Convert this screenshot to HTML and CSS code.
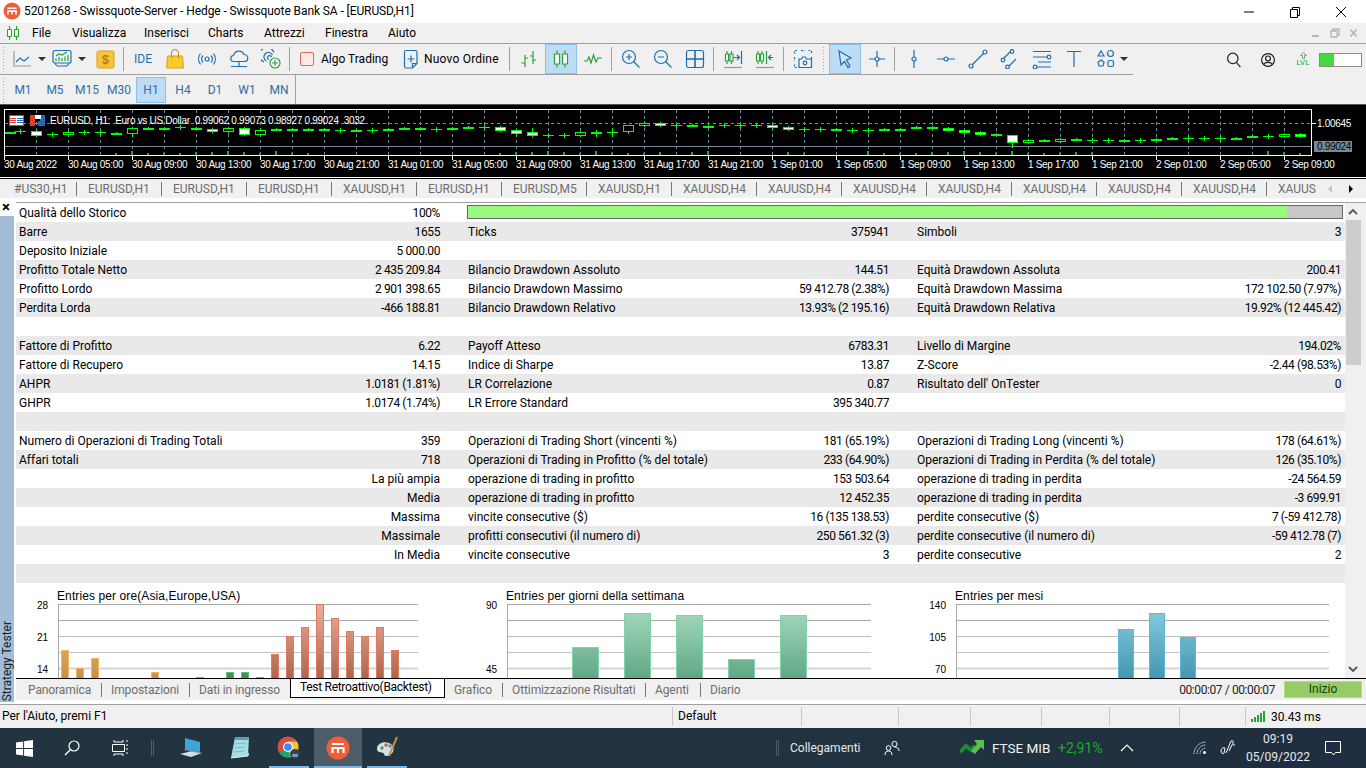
FILE: index.html
```html
<!DOCTYPE html>
<html lang="it">
<head>
  <meta charset="UTF-8" />
  <title>5201268 - Swissquote-Server - Hedge - Swissquote Bank SA - [EURUSD,H1]</title>
  <link rel="stylesheet" href="styles.css">
</head>
<body>
  <div class="titlebar">
    <svg class="logo" viewBox="0 0 20 20" width="18" height="18"><circle cx="10" cy="10" r="9.500" fill="#f25c37"/><path d="M5 7h10M5.500 14v-4h9v4M10 10v4" fill="none" stroke="#fff" stroke-width="1.800"/></svg>
    <span class="title">5201268 - Swissquote-Server - Hedge - Swissquote Bank SA - [EURUSD,H1]</span>
    <div class="winctl">
      <svg viewBox="0 0 12 12" width="12" height="12"><path d="M1 6h10" stroke="#000" fill="none"/></svg>
      <svg viewBox="0 0 12 12" width="12" height="12"><path d="M1.500 3.500h7v8h-7zM3.500 3.500v-2h7v8h-2" stroke="#000" fill="none"/></svg>
      <svg viewBox="0 0 12 12" width="12" height="12"><path d="M1 1l10 10M11 1L1 11" stroke="#000" fill="none"/></svg>
    </div>
  </div>

  <div class="menubar">
    <svg class="menuicon" viewBox="0 0 14 14" width="14" height="14"><path d="M3.500 0v14M10.500 0v14" stroke="#1aa81a" fill="none"/><path d="M1.500 3.500h4v7h-4zM8.500 3.500h4v7h-4z" fill="#fff" stroke="#1aa81a"/></svg>
    <span class="m1">File</span><span class="m2">Visualizza</span><span class="m3">Inserisci</span><span class="m4">Charts</span><span class="m5">Attrezzi</span><span class="m6">Finestra</span><span class="m7">Aiuto</span>
    <div class="mdi">
      <svg viewBox="0 0 10 10" width="10" height="10"><path d="M1 8h7" stroke="#b5b5b5" stroke-width="2" fill="none"/></svg>
      <svg viewBox="0 0 10 10" width="10" height="10"><path d="M1 3h6v6H1zM3 3V1h6v6H7" stroke="#b5b5b5" stroke-width="1.300" fill="none"/></svg>
      <svg viewBox="0 0 10 10" width="10" height="10"><path d="M1.500 1.500l6 7M7.500 1.500l-6 7" stroke="#b5b5b5" stroke-width="1.600" fill="none"/></svg>
    </div>
  </div>

  <div class="toolrow">
    <div class="toolbar">
      <div class="handle"></div>
      <div class="tb w30"><svg class="ic" viewBox="0 0 20 20"><path d="M2 2v15h17" stroke="#999"/><path d="M4 13l4-4 4 3 5-4"/></svg></div>
      <div class="dd"></div>
      <div class="tb w30"><svg class="ic" viewBox="0 0 20 20"><path d="M3 1.500h14a2 2 0 0 1 2 2V12a2 2 0 0 1-2 2H3a2 2 0 0 1-2-2V3.500a2 2 0 0 1 2-2zM5 17h10M3 14.500l2 2.500M17 14.500L15 17"/><path d="M4 12V9.500M7 12V8M10 12V9M13 12V7.500M16 12V6M4 7l3-2 3 1 5-3" stroke="#27a33a"/></svg></div>
      <div class="dd"></div>
      <div class="tb gap2"><svg viewBox="0 0 20 20" width="19" height="19"><rect x="1" y="1" width="18" height="18" rx="2" fill="#f7c437" stroke="#d9a021"/><text x="10" y="15" class="dollar">$</text></svg></div>
      <div class="sep"></div>
      <div class="tb blue">IDE</div>
      <div class="tb"><svg viewBox="0 0 20 20" width="20" height="20"><path d="M2.500 7h15l1 12h-17z" fill="#f9c92d" stroke="#d9a021"/><path d="M6.500 9V4a3.500 3.500 0 0 1 7 0v5" fill="none" stroke="#b98c1c"/></svg></div>
      <div class="tb"><svg class="ic" viewBox="0 0 20 20"><circle cx="10" cy="10" r="2"/><path d="M6 6.500a5 5 0 0 0 0 7M14 6.500a5 5 0 0 1 0 7M3.500 4.500a9 9 0 0 0 0 11M16.500 4.500a9 9 0 0 1 0 11"/></svg></div>
      <div class="tb"><svg class="ic" viewBox="0 0 20 20"><path d="M5 12.500a3 3 0 0 1-.5-6 5.500 5.500 0 0 1 10.500-1 3.500 3.500 0 0 1 .5 7zM10 12.500V16M2 17.500h16M10 16v1.500"/></svg></div>
      <div class="tb"><svg class="ic" viewBox="0 0 20 20"><path d="M3 13a7.500 7.500 0 1 1 10-9.500M5.500 12a4.500 4.500 0 1 1 6-6M8 10.500a2 2 0 1 1 2.500-2.500"/><circle cx="14" cy="14" r="5" fill="#fff" stroke="#27a33a"/><path d="M14 11v6M11 14h6" stroke="#27a33a"/></svg></div>
      <div class="sep"></div>
      <div class="algo"><span class="check"></span>Algo Trading</div>
      <div class="order"><svg class="ic" viewBox="0 0 20 20"><path d="M5 1.500h9.500a1.500 1.500 0 0 1 1.500 1.500v11.500L11.500 19H5a1.500 1.500 0 0 1-1.500-1.500V3A1.500 1.500 0 0 1 5 1.500zM10 6.500v7M6.500 10h7M16 14.500h-4.500V19"/></svg>Nuovo Ordine</div>
      <div class="sep"></div>
      <div class="tb"><svg class="ic gr" viewBox="0 0 20 20"><path d="M6 6v12M2.500 14H6M6 9h3M14 2v13M11 7h3M14 11h3"/></svg></div>
      <div class="tb on"><svg class="ic gr" viewBox="0 0 20 20"><path d="M6 1.500v17M14 1.500v17"/><path d="M3.500 5h5v10h-5zM11.500 5h5v10h-5z" fill="#fff"/></svg></div>
      <div class="tb"><svg class="ic gr" viewBox="0 0 20 20"><path d="M1 12h3l2-4 2 6 2.500-8 2.500 7 2-4h4"/></svg></div>
      <div class="sep"></div>
      <div class="tb"><svg class="ic" viewBox="0 0 20 20"><circle cx="8" cy="8" r="6.500"/><path d="M12.500 12.500l6 6M8 5v6M5 8h6"/></svg></div>
      <div class="tb"><svg class="ic" viewBox="0 0 20 20"><circle cx="8" cy="8" r="6.500"/><path d="M12.500 12.500l6 6M5 8h6"/></svg></div>
      <div class="tb"><svg class="ic" viewBox="0 0 20 20"><rect x="1.500" y="1.500" width="17" height="17" rx="2"/><path d="M10 1.500v17M1.500 10h17" stroke-width="1.600"/></svg></div>
      <div class="sep"></div>
      <div class="tb"><svg class="ic gr" viewBox="0 0 20 20"><path d="M4 2v13M8.500 2v13"/><path d="M2.500 5h3v7h-3zM7 5h3v7H7z" fill="#fff"/><path d="M11 8.500h5M14 6l2.500 2.500L14 11" stroke="#1b6fb5"/><path d="M18.500 2v13" stroke="#1b6fb5"/><path d="M1 18.500h18" stroke="#999"/></svg></div>
      <div class="tb"><svg class="ic gr" viewBox="0 0 20 20"><path d="M3 2v13M7 2v13"/><path d="M1.500 5h3v7h-3zM5.500 5h3v7h-3z" fill="#fff"/><path d="M11.500 2v13" stroke="#27a33a"/><path d="M18 8.500h-4.500M16 6l-2.500 2.500L16 11" stroke="#1b6fb5"/><path d="M1 18.500h18" stroke="#999"/></svg></div>
      <div class="sep"></div>
      <div class="tb"><svg class="ic" viewBox="0 0 20 20"><path d="M1.500 4.500v-3h3M8 1.500h4M15.500 1.500h3v3M18.500 8v2M1.500 8v4M1.500 15.500v3h3M8 18.500h2" stroke-dasharray="2 1.500"/><path d="M6 18.500V10h2.500l1-2h3l1 2H18.500v8.500z"/><circle cx="12" cy="14" r="1.800"/></svg></div>
      <div class="handle narrow"></div>
      <div class="tb on"><svg class="ic" viewBox="0 0 20 20"><path d="M4 2l12 7-4.500 2 3.500 6-2 1.500-3.500-6L6 16z" fill="#cfe4f7"/></svg></div>
      <div class="tb"><svg class="ic" viewBox="0 0 20 20"><path d="M10 2v6M10 12v6M2 10h6M12 10h6"/><circle cx="10" cy="10" r="2"/></svg></div>
      <div class="sep tight"></div>
      <div class="tb"><svg class="ic" viewBox="0 0 20 20"><path d="M10 1v7M10 12v7"/><circle cx="10" cy="10" r="2"/></svg></div>
      <div class="tb"><svg class="ic" viewBox="0 0 20 20"><path d="M1 10h7M12 10h7"/><circle cx="10" cy="10" r="2"/></svg></div>
      <div class="tb"><svg class="ic" viewBox="0 0 20 20"><path d="M4.500 15.500L15.500 4.500"/><circle cx="3" cy="17" r="2"/><circle cx="17" cy="3" r="2"/></svg></div>
      <div class="tb"><svg class="ic" viewBox="0 0 20 20"><path d="M4 9l6-6M9 17l7-7"/><circle cx="3" cy="11" r="1.800"/><circle cx="12" cy="2.500" r="1.800"/><circle cx="7.500" cy="18" r="1.800"/></svg></div>
      <div class="tb"><svg class="ic" viewBox="0 0 20 20"><path d="M1 2.500h18M1 8h14M6 13h13M5 18h14"/><circle cx="17" cy="8" r="1.800"/><circle cx="3" cy="18" r="1.800"/></svg></div>
      <div class="tb"><svg class="ic" viewBox="0 0 20 20"><path d="M3 2.500h14M10 2.500V18"/></svg></div>
      <div class="tb"><svg class="ic" viewBox="0 0 20 20"><path d="M5 2l3 5H2z"/><circle cx="14.500" cy="4.500" r="3"/><path d="M5 11l3 2.200-1 3.800H3l-1-3.800z"/><rect x="12" y="11.500" width="5.500" height="6" rx="1.500"/></svg></div>
      <div class="dd small"></div>
    </div>
    <div class="account">
      <svg class="dark" viewBox="0 0 20 20" width="16" height="16"><circle cx="8.500" cy="8" r="6.500"/><path d="M13 13l5 6"/></svg>
      <svg class="dark" viewBox="0 0 20 20" width="16" height="16"><circle cx="10" cy="10" r="8"/><circle cx="10" cy="8" r="3"/><path d="M4.500 16c1-4 10-4 11 0"/></svg>
      <div class="lvl"><svg viewBox="0 0 12 8" width="9" height="7"><path d="M6 0l4 4H7.500v4h-3V4H2z" fill="none" stroke="#27a33a"/></svg><span>LVL</span></div>
      <div class="lvlbar"><div class="lvlfill"></div></div>
    </div>
  </div>

  <div class="timerow">
    <div class="handle"></div>
    <div class="tf">M1</div><div class="tf">M5</div><div class="tf">M15</div><div class="tf">M30</div><div class="tf on">H1</div><div class="tf">H4</div><div class="tf">D1</div><div class="tf">W1</div><div class="tf">MN</div>
  </div>

  <div class="chart">
    <svg id="candles" viewBox="0 105 1366 72" width="1366" height="72">
      <rect x="9.500" y="115.500" width="14" height="10" fill="#fff" stroke="#d8402c"/>
      <path d="M10 118.500h6M10 120.500h6M10 122.500h6" stroke="#d8402c"/>
      <path d="M17 118.500h6M17 120.500h6M17 122.500h6" stroke="#1b6fb5"/>
      <path d="M30 115h8v3h-3v8h-5z" fill="#d8402c"/>
      <path d="M38 115h7v11h-7v-5h2v-3h-2z" fill="#1b6fb5"/>
      <path d="M35 115h6v4h-6z" fill="#fff"/>
      <text x="50" y="124" class="clabel legend" textLength="315" lengthAdjust="spacing">EURUSD, H1:  Euro vs US Dollar  0.99062 0.99073 0.98927 0.99024  3032</text>
      <text x="1317" y="127" class="clabel">1.00645</text>
      <rect x="1314" y="141" width="38" height="11" fill="#778899"/>
      <text x="1317" y="150" class="clabel price">0.99024</text>
    </svg>
  </div>
  <div class="chartedge"></div>

  <div class="tabs">
    <div class="tablist">
      <div class="tab first">#US30,H1</div><div class="tab">EURUSD,H1</div><div class="tab">EURUSD,H1</div><div class="tab">EURUSD,H1</div><div class="tab">XAUUSD,H1</div><div class="tab">EURUSD,H1</div><div class="tab">EURUSD,M5</div><div class="tab">XAUUSD,H1</div><div class="tab">XAUUSD,H4</div><div class="tab">XAUUSD,H4</div><div class="tab">XAUUSD,H4</div><div class="tab">XAUUSD,H4</div><div class="tab">XAUUSD,H4</div><div class="tab">XAUUSD,H4</div><div class="tab">XAUUSD,H4</div><div class="tab last">XAUUSD,H4</div>
    </div>
    <div class="arrow prev"></div>
    <div class="arrow next"></div>
  </div>

  <div class="tester">
    <div class="side">
      <div class="closex">×</div>
      <div class="strip"><span>Strategy Tester</span></div>
    </div>
    <div class="panel">
      <div class="report">
        <div class="sheet">
          <div class="row">
            <div class="cell"><span>Qualità dello Storico</span><span>100%</span></div>
            <div class="quality"><div class="qfill"></div></div>
          </div>
          <div class="row">
            <div class="cell"><span>Barre</span><span>1655</span></div>
            <div class="cell"><span>Ticks</span><span>375941</span></div>
            <div class="cell"><span>Simboli</span><span>3</span></div>
          </div>
          <div class="row">
            <div class="cell"><span>Deposito Iniziale</span><span>5 000.00</span></div>
            <div class="cell"></div><div class="cell"></div>
          </div>
          <div class="row">
            <div class="cell"><span>Profitto Totale Netto</span><span>2 435 209.84</span></div>
            <div class="cell"><span>Bilancio Drawdown Assoluto</span><span>144.51</span></div>
            <div class="cell"><span>Equità Drawdown Assoluta</span><span>200.41</span></div>
          </div>
          <div class="row">
            <div class="cell"><span>Profitto Lordo</span><span>2 901 398.65</span></div>
            <div class="cell"><span>Bilancio Drawdown Massimo</span><span>59 412.78 (2.38%)</span></div>
            <div class="cell"><span>Equità Drawdown Massima</span><span>172 102.50 (7.97%)</span></div>
          </div>
          <div class="row">
            <div class="cell"><span>Perdita Lorda</span><span>-466 188.81</span></div>
            <div class="cell"><span>Bilancio Drawdown Relativo</span><span>13.93% (2 195.16)</span></div>
            <div class="cell"><span>Equità Drawdown Relativa</span><span>19.92% (12 445.42)</span></div>
          </div>
          <div class="row"></div>
          <div class="row">
            <div class="cell"><span>Fattore di Profitto</span><span>6.22</span></div>
            <div class="cell"><span>Payoff Atteso</span><span>6783.31</span></div>
            <div class="cell"><span>Livello di Margine</span><span>194.02%</span></div>
          </div>
          <div class="row">
            <div class="cell"><span>Fattore di Recupero</span><span>14.15</span></div>
            <div class="cell"><span>Indice di Sharpe</span><span>13.87</span></div>
            <div class="cell"><span>Z-Score</span><span>-2.44 (98.53%)</span></div>
          </div>
          <div class="row">
            <div class="cell"><span>AHPR</span><span>1.0181 (1.81%)</span></div>
            <div class="cell"><span>LR Correlazione</span><span>0.87</span></div>
            <div class="cell"><span>Risultato dell' OnTester</span><span>0</span></div>
          </div>
          <div class="row">
            <div class="cell"><span>GHPR</span><span>1.0174 (1.74%)</span></div>
            <div class="cell"><span>LR Errore Standard</span><span>395 340.77</span></div>
            <div class="cell"></div>
          </div>
          <div class="row"></div>
          <div class="row">
            <div class="cell"><span>Numero di Operazioni di Trading Totali</span><span>359</span></div>
            <div class="cell"><span>Operazioni di Trading Short (vincenti %)</span><span>181 (65.19%)</span></div>
            <div class="cell"><span>Operazioni di Trading Long (vincenti %)</span><span>178 (64.61%)</span></div>
          </div>
          <div class="row">
            <div class="cell"><span>Affari totali</span><span>718</span></div>
            <div class="cell"><span>Operazioni di Trading in Profitto (% del totale)</span><span>233 (64.90%)</span></div>
            <div class="cell"><span>Operazioni di Trading in Perdita (% del totale)</span><span>126 (35.10%)</span></div>
          </div>
          <div class="row">
            <div class="cell"><span></span><span class="word">La più ampia</span></div>
            <div class="cell"><span>operazione di trading in profitto</span><span>153 503.64</span></div>
            <div class="cell"><span>operazione di trading in perdita</span><span>-24 564.59</span></div>
          </div>
          <div class="row">
            <div class="cell"><span></span><span class="word">Media</span></div>
            <div class="cell"><span>operazione di trading in profitto</span><span>12 452.35</span></div>
            <div class="cell"><span>operazione di trading in perdita</span><span>-3 699.91</span></div>
          </div>
          <div class="row">
            <div class="cell"><span></span><span class="word">Massima</span></div>
            <div class="cell"><span>vincite consecutive ($)</span><span>16 (135 138.53)</span></div>
            <div class="cell"><span>perdite consecutive ($)</span><span>7 (-59 412.78)</span></div>
          </div>
          <div class="row">
            <div class="cell"><span></span><span class="word">Massimale</span></div>
            <div class="cell"><span>profitti consecutivi (il numero di)</span><span>250 561.32 (3)</span></div>
            <div class="cell"><span>perdite consecutive (il numero di)</span><span>-59 412.78 (7)</span></div>
          </div>
          <div class="row">
            <div class="cell"><span></span><span class="word">In Media</span></div>
            <div class="cell"><span>vincite consecutive</span><span>3</span></div>
            <div class="cell"><span>perdite consecutive</span><span>2</span></div>
          </div>
          <div class="row"></div>
          <div class="graphs">
            <svg class="graph g1" id="g1" viewBox="16 584 449 95" width="449" height="95"></svg>
            <svg class="graph g2" id="g2" viewBox="465 584 449 95" width="449" height="95"></svg>
            <svg class="graph g3" id="g3" viewBox="914 584 431 95" width="431" height="95"></svg>
          </div>
        </div>
        <div class="scroll">
          <svg viewBox="0 0 16 16" width="16" height="16"><path d="M4 10l4-4 4 4" fill="none" stroke="#555" stroke-width="1.800"/></svg>
          <div class="thumb"></div>
          <svg class="down" viewBox="0 0 16 16" width="16" height="16"><path d="M4 6l4 4 4-4" fill="none" stroke="#555" stroke-width="1.800"/></svg>
        </div>
      </div>
      <div class="btabs">
        <div class="btab">Panoramica</div>
        <div class="btab">Impostazioni</div>
        <div class="btab plain">Dati in ingresso</div>
        <div class="btab active">Test Retroattivo(Backtest)</div>
        <div class="btab">Grafico</div>
        <div class="btab">Ottimizzazione Risultati</div>
        <div class="btab">Agenti</div>
        <div class="btab plain">Diario</div>
        <div class="timer">00:00:07 / 00:00:07</div>
        <div class="start">Inizio</div>
      </div>
    </div>
  </div>

  <div class="status">
    <div class="st s1">Per l'Aiuto, premi F1</div>
    <div class="st s2">Default</div>
    <div class="st s3"></div>
    <div class="st s4"></div>
    <div class="st s5"></div>
    <div class="st s6"></div>
    <div class="st s7"></div>
    <div class="st s8"></div>
    <div class="st s9"><span class="signal"><i></i><i></i><i></i><i></i><i></i></span>30.43 ms</div>
  </div>

  <div class="taskbar">
    <div class="task"><svg viewBox="0 0 16 16" width="17" height="17"><path d="M0 2.300L6.700 1.300V7.600H0zM7.600 1.200L16 0V7.600H7.600zM0 8.400H6.700V14.700L0 13.700zM7.600 8.400H16V16L7.600 14.800z" fill="#fff"/></svg></div>
    <div class="task"><svg viewBox="0 0 16 16" width="16" height="16"><circle cx="10" cy="6" r="5" fill="none" stroke="#fff" stroke-width="1.200"/><path d="M6.300 9.700L1 15" stroke="#fff" stroke-width="1.400"/></svg></div>
    <div class="task"><svg viewBox="0 0 16 16" width="16" height="16"><path d="M2 0v2h9V0M2 16v-2h9v2M.5 4.500h12v7H.5zM14 1h2M14 5h2M14 9h2M14 13h2" fill="none" stroke="#fff"/></svg></div>
    <div class="bar-sep"></div>
    <div class="task app"><svg viewBox="0 0 24 22" width="24" height="22"><path d="M6 1l15 4v10L6 12z" fill="#3fa3e0"/><path d="M1 17l12-3 10 2-11 4z" fill="#d8dde0"/><path d="M6 12l15 3-2 1-14-3z" fill="#8a9aa5"/></svg></div>
    <div class="task app"><svg viewBox="0 0 22 24" width="22" height="24"><path d="M6 1h14l-1 19-17 2z" fill="#a8dce8"/><path d="M6 1h14l-.3 3H5.300z" fill="#5f9fb0"/><path d="M6 8l11-1M5 12l11-1M4 16l11-1" stroke="#7ab9c9"/><path d="M2 22l17-2 .5-3" fill="none" stroke="#e3eef0"/></svg></div>
    <div class="task app open"><svg viewBox="0 0 24 24" width="24" height="24"><circle cx="11" cy="11" r="10.500" fill="#dd4b3e"/><path d="M11 11L2 16a10.500 10.500 0 0 0 11 5.300z" fill="#1fa463"/><path d="M11 5.500h9a10.500 10.500 0 0 1-7 15.800L11 11z" fill="#fbc02d"/><circle cx="11" cy="11" r="5" fill="#fff"/><circle cx="11" cy="11" r="3.800" fill="#4286f5"/><circle cx="18" cy="18" r="5" fill="#2f4653"/><text x="18" y="20.500" class="badge-m">m</text></svg></div>
    <div class="task app open current"><svg viewBox="0 0 24 24" width="24" height="24"><circle cx="12" cy="12" r="11.500" fill="#f25c37"/><path d="M6 8h12M6.500 17v-5h11v5M12 12v5" fill="none" stroke="#fff" stroke-width="2.200"/></svg></div>
    <div class="task app open"><svg viewBox="0 0 24 24" width="24" height="24"><path d="M2 13c0-6 7-8 12-6 6 2 6 9 1 12-3 2-6 1-6-1 0-3-7 0-7-5z" fill="#d5dfe8"/><circle cx="7" cy="12" r="1.700" fill="#3aa655"/><circle cx="11" cy="9" r="1.700" fill="#e04a3a"/><circle cx="15" cy="10" r="1.700" fill="#3a8fe0"/><path d="M14 20L22 1" stroke="#c8902e" stroke-width="2"/></svg></div>
    <div class="tray">
      <div class="bar-sep right"></div>
      <span class="links">Collegamenti</span>
      <svg class="people" viewBox="0 0 16 16" width="16" height="16"><circle cx="10.500" cy="4" r="2.600"/><path d="M15 11c0-3-2-4-4.500-4"/><circle cx="4.500" cy="8" r="2.300"/><path d="M1 15c0-3 1.500-4 3.500-4s3.500 1 3.500 4"/></svg>
      <svg class="ftse-icon" viewBox="0 0 24 16" width="24" height="16"><path d="M0 12l6-6 5 4 4-4" fill="none" stroke="#1c8a2e" stroke-width="4"/><path d="M14 0h10v10l-3-3-6 7-4-3 6-7z" fill="#5cc04a"/></svg>
      <span class="ftse">FTSE MIB</span>
      <span class="pct">+2,91%</span>
      <svg class="caret" viewBox="0 0 14 8" width="14" height="8"><path d="M1 7l6-6 6 6" fill="none" stroke="#fff" stroke-width="1.200"/></svg>
      <svg class="wifi" viewBox="0 0 14 14" width="14" height="14"><path d="M1 13A12 12 0 0 1 13 1M4 13A9 9 0 0 1 13 4M7 13a6 6 0 0 1 6-6" fill="none" stroke="#dfe5e8" stroke-dasharray="1.500 .8"/><circle cx="11.500" cy="11.500" r="1.500" fill="#fff"/></svg>
      <svg class="pen" viewBox="0 0 16 16" width="16" height="16"><path d="M1 11c0-3 3-4 4-3l-1 5c-1 2-3 0-3-2zM6 13L11 1c2-1 3 1 2 2l-4 8M13 5h2" fill="none" stroke="#fff"/></svg>
      <div class="clock"><span>09:19</span><span>05/09/2022</span></div>
      <svg class="notify" viewBox="0 0 16 15" width="16" height="15"><path d="M.5.500h15v11h-5l-2 2.500-2-2.500h-6z" fill="none" stroke="#fff"/></svg>
    </div>
  </div>

  <script>
    // candles: x, type, y1, y2 (t thick, n thin, w white, h hollow), optional wick ends
    const candles = [
      [4,"t",132],[20,"n",131],[36,"w",131,135],[52,"n",134],[68,"h",132,134],[84,"n",132],[100,"n",132],[116,"t",133],
      [132,"h",128,133,127,136],[148,"t",128],[164,"t",128],[180,"n",127],[196,"t",128],[212,"w",129,131],[228,"h",128,131],
      [244,"w",128,134],[260,"h",130,134,128,135],[276,"t",129],[292,"t",129],[308,"t",129],[324,"t",129],[340,"n",130],
      [356,"t",130],[372,"n",130],[388,"t",129],[404,"t",128],[420,"t",128],[436,"n",129],[452,"t",128],[468,"t",127],
      [484,"n",127],[500,"w",127,130],[516,"w",130,133],[532,"w",132,135,128,136],[548,"n",135],[564,"n",135],[580,"h",132,135],
      [596,"t",132,133,130,136],[612,"n",132,132,128,136],[628,"h",125,131,125,133],[644,"h",123,125,121,126],[660,"w",123,125],
      [676,"n",125],[692,"t",125],[708,"t",126],[724,"n",125],[740,"n",125],[756,"n",125],[772,"w",125,127],[788,"w",127,129],
      [804,"n",129],[820,"n",129],[836,"t",129],[852,"n",130],[868,"n",130],[884,"t",129],[900,"t",129],[916,"t",127],[932,"t",127],
      [948,"w",128,130],[964,"w",130,132],[980,"w",132,134],[996,"t",134],[1012,"w",135,142,135,147],[1028,"h",140,142],[1044,"t",140],
      [1060,"h",139,141],[1076,"t",139],[1092,"n",140],[1108,"n",140],[1124,"t",140],[1140,"n",140],[1156,"t",139],[1172,"t",138],
      [1188,"n",138],[1204,"n",138],[1220,"n",138],[1236,"t",138],[1252,"t",136],[1268,"n",136],[1284,"h",134,136],[1300,"w",134,136]
    ];
    const volumes = [116,132,148,164,180,196,212,228,244,260,276,292,308,500,516,532,548,564,580,596,612,628,644,660,692,708,788,804,868,884,900,916,932,948,964,980,996,1012,1028,1044,1060,1076,1092,1268,1284,1300];
    const dates = ["30 Aug 2022","30 Aug 05:00","30 Aug 09:00","30 Aug 13:00","30 Aug 17:00","30 Aug 21:00","31 Aug 01:00","31 Aug 05:00","31 Aug 09:00","31 Aug 13:00","31 Aug 17:00","31 Aug 21:00","1 Sep 01:00","1 Sep 05:00","1 Sep 09:00","1 Sep 13:00","1 Sep 17:00","1 Sep 21:00","2 Sep 01:00","2 Sep 05:00","2 Sep 09:00"];

    let s = "";
    for (let x = 36; x < 1311; x += 32) {
      s += `<path class="dash" d="M${x + .5} 110V155"/>`;
    }
    s += `<path class="dash" d="M5 123.500H1311"/><path class="bid" d="M5 146.500H1311"/>`;
    volumes.forEach((x, i) => {
      const h = [2, 4, 2, 2, 2, 3, 3, 4, 3][i % 9];
      s += `<rect class="vol" x="${x - 1}" y="${155 - h}" width="2" height="${h}"/>`;
    });
    candles.forEach(([x, type, y1, y2, hi, lo]) => {
      const up = hi !== undefined ? hi : y1 - (type === "n" ? 2 : 1);
      const down = lo !== undefined ? lo : (y2 || y1) + (type === "n" ? 2 : 1);
      s += `<path class="wick" d="M${x + .5} ${up}V${down + 1}"/>`;
      if (type === "t") s += `<rect class="bull" x="${Math.max(x - 5, 5)}" y="${y1}" width="11" height="${(y2 || y1 + 1) - y1 + 1}"/>`;
      if (type === "n") s += `<rect class="bull" x="${x - 5}" y="${y1}" width="11" height="1"/>`;
      if (type === "w") s += `<rect class="bear" x="${x - 4.5}" y="${y1 + .5}" width="10" height="${y2 - y1}"/>`;
      if (type === "h") s += `<rect class="holl" x="${x - 4.5}" y="${y1 + .5}" width="10" height="${y2 - y1}"/>`;
    });
    s += `<rect class="frame" x="4.500" y="109.500" width="1307" height="46"/><path class="frame" d="M1311 123.500h5"/>`;
    dates.forEach((d, i) => {
      const x = 4 + i * 64;
      s += `<path class="frame" d="M${x + .5} 155V160"/><text class="clabel" x="${x}" y="168">${d}</text>`;
    });
    const svg = document.getElementById("candles");
    svg.innerHTML = s + svg.innerHTML;

    // histogram panels below the report
    const graphs = [
      { id: "g1", title: "Entries per ore(Asia,Europe,USA)", left: 58, right: 418, base: 16, labels: ["28", "21", "14"], w: 7,
        bars: [[61,651,"o"],[76,669,"o"],[91,659,"o"],[151,673,"o"],[196,678,"g"],[226,673,"g"],[241,673,"g"],[256,678,"g"],[271,655,"r"],[286,637,"r"],[301,628,"r"],[316,605,"r"],[331,619,"r"],[346,632,"r"],[361,637,"r"],[376,628,"r"],[391,651,"r"]] },
      { id: "g2", title: "Entries per giorni della settimana", left: 507, right: 871, base: 465, labels: ["90", "", "45"], w: 26,
        bars: [[572,648,"t"],[624,614,"t"],[676,616,"t"],[728,660,"t"],[780,616,"t"]] },
      { id: "g3", title: "Entries per mesi", left: 956, right: 1329, base: 914, labels: ["140", "105", "70"], w: 15,
        bars: [[1118,630,"b"],[1149,614,"b"],[1180,638,"b"]] }
    ];
    const gradients = {
      o: ["#f3c27d", "#b98434", "#efb565"], g: ["#7cc98a", "#2f7f45", "#62b872"], r: ["#edae9c", "#a04f33", "#e07a60"],
      t: ["#aadcc2", "#4a9a74", "#80d4aa"], b: ["#8dcfe2", "#2f87a5", "#5ab9d9"]
    };
    graphs.forEach(g => {
      let h = `<defs>`;
      Object.keys(gradients).forEach(k => {
        h += `<linearGradient id="${g.id}${k}" gradientUnits="userSpaceOnUse" x1="0" y1="605" x2="0" y2="700"><stop offset="0" stop-color="${gradients[k][0]}"/><stop offset="1" stop-color="${gradients[k][1]}"/></linearGradient>`;
      });
      h += `</defs><text class="gtitle" x="${g.base + 41}" y="601">${g.title}</text>`;
      [[605, "#a8a8a8", 1], [621, "#a8a8a8", 1], [637, "#bdbdbd", 1], [653, "#c4c4c4", 1], [669, "#d4d4d4", 2]].forEach(([y, c, w]) => {
        h += `<path d="M${g.left} ${y + .5}H${g.right}" stroke="${c}" stroke-width="${w}"/>`;
      });
      h += `<path d="M${g.left + .5} 605V679" stroke="#a8a8a8"/>`;
      g.labels.forEach((t, i) => {
        h += `<text class="glabel" x="${g.left - 10}" y="${610 + i * 32}">${t}</text>`;
      });
      g.bars.forEach(([x, top, k]) => {
        h += `<rect x="${x + .5}" y="${top + .5}" width="${g.w}" height="${700 - top}" fill="url(#${g.id}${k})" stroke="${gradients[k][2]}"/>`;
      });
      document.getElementById(g.id).innerHTML = h;
    });
  </script>
</body>
</html>
```

FILE: styles.css
```css
* { box-sizing: border-box; }
body { margin: 0; width: 1366px; height: 768px; overflow: hidden; background: #f0f0f0; font-family: Roboto, "Noto Sans", sans-serif; font-size: 12px; color: #000; display: flex; flex-direction: column; }
svg { display: block; flex: none; }

.titlebar { height: 23px; background: #fff; display: flex; align-items: center; position: relative; }
.logo { margin: 0 0 1px 3px; }
.title { margin-left: 3px; padding-bottom: 1px; letter-spacing: -.09px; }
.winctl { margin-left: auto; display: flex; gap: 34px; padding-right: 19px; }

.menubar { height: 20px; display: flex; align-items: center; position: relative; }
.menuicon { margin-left: 6px; }
.menubar span { position: absolute; top: 3px; }
.m1 { left: 32px; } .m2 { left: 72px; } .m3 { left: 144px; } .m4 { left: 208px; } .m5 { left: 264px; } .m6 { left: 325px; } .m7 { left: 388px; }
.mdi { margin-left: auto; display: flex; gap: 9px; padding-right: 7px; }

.toolrow { height: 32px; border-top: 1px solid #a0a0a0; display: flex; }
.toolbar { width: 1133px; height: 31px; border-bottom: 1px solid #a0a0a0; display: flex; align-items: center; }
.handle { width: 7px; height: 26px; margin-right: 0; background: radial-gradient(circle, #aaa 40%, transparent 45%) 2px 0 / 3px 3px repeat-y; }
.handle.narrow { width: 10px; background-position: 3px 0; }
.tb { width: 32px; height: 30px; display: flex; align-items: center; justify-content: center; flex: none; }
.tb.w30 { width: 30px; }
.tb.gap2 { margin-left: 2px; }
.tb.on { background: #bfdcf5; border: 1px solid #8cc0ec; }
.tb.blue { color: #1b6fb5; }
.ic { width: 20px; height: 20px; fill: none; stroke: #1b6fb5; stroke-width: 1.200; }
.ic.gr { stroke: #27a33a; }
.dollar { font: bold 13px "Liberation Sans", sans-serif; fill: #b8791a; text-anchor: middle; }
.dd { height: 4px; flex: none; border-top: 4px solid #333; border-left: 4px solid transparent; border-right: 4px solid transparent; width: 8px; margin: 0 1px; }
.dd.small { margin: 0 0 0 -2px; }
.sep { width: 1px; height: 24px; background: #a0a0a0; margin: 0 3px 0 2px; flex: none; }
.sep.tight { margin-left: 1px; }
.algo { display: flex; align-items: center; width: 106px; padding-left: 7px; flex: none; }
.check { width: 14px; height: 14px; background: #fde8e4; border: 1px solid #e4675a; border-radius: 2px; margin-right: 7px; }
.order { display: flex; align-items: center; gap: 3px; width: 108px; flex: none; padding-left: 2px; letter-spacing: .2px; }

.account { flex: 1; display: flex; align-items: center; height: 31px; padding-left: 93px; }
.dark { fill: none; stroke: #222; stroke-width: 1.500; }
.account .dark + .dark { margin-left: 18px; }
.lvl { width: 14px; margin-left: 20px; color: #27a33a; font-size: 8px; line-height: 8px; display: flex; flex-direction: column; align-items: center; }
.lvlbar { width: 43px; height: 14px; margin-left: 9px; border: 1px solid #8a8a8a; background: #fff; }
.lvlfill { width: 14px; height: 100%; background: #44dc3c; }

.timerow { height: 29px; width: 296px; border-right: 1px solid #a0a0a0; display: flex; align-items: center; flex: none; }
.tf { width: 32px; height: 26px; line-height: 24px; text-align: center; color: #2f6ea5; border: 1px solid transparent; flex: none; }
.tf.on { width: 30px; margin: 0 1px; background: #bfdcf5; border-color: #8cc0ec; }

.chart { height: 73px; background: #000; border-top: 1px solid #555; flex: none; overflow: hidden; }
.chartedge { height: 2px; background: #fff; border-bottom: 1px solid #000; flex: none; }
.clabel { font: 10px "Liberation Sans", sans-serif; letter-spacing: -.3px; fill: #fff; }
.clabel.legend { letter-spacing: 0; white-space: pre; }
.clabel.price { fill: #000; }
.dash { stroke: #778899; stroke-dasharray: 3 3; fill: none; }
.bid { stroke: #778899; fill: none; }
.vol { fill: #1fa82e; }
.wick { stroke: #00ff00; fill: none; }
.bull { fill: #00ff00; }
.bear { fill: #fff; stroke: #00ff00; }
.holl { fill: #000; stroke: #00ff00; }
.frame { fill: none; stroke: #fff; }

.tabs { height: 19px; display: flex; align-items: center; flex: none; position: relative; }
.tablist { width: 1316px; display: flex; padding-left: 7px; }
.tab { width: 85px; height: 14px; line-height: 14px; padding-left: 11px; border-right: 1px solid #777; color: #6e6e6e; white-space: nowrap; flex: none; }
.tab.first { width: 70px; padding-left: 7px; }
.tab.last { border: 0; width: 49px; overflow: hidden; }
.arrow { width: 0; height: 0; border-top: 4px solid transparent; border-bottom: 4px solid transparent; }
.arrow.prev { margin-left: 12px; border-right: 4px solid #c4c4c4; }
.arrow.next { margin-left: 17px; border-left: 4px solid #000; }

.tester { height: 507px; background: #fff; border-bottom: 1px solid #a0a0a0; display: flex; flex: none; padding-top: 4px; }
.side { width: 16px; position: relative; flex: none; display: flex; flex-direction: column; margin-top: -4px; height: 506px; }
.closex { height: 18px; line-height: 18px; font-size: 15px; font-weight: bold; padding-left: 2px; }
.strip { width: 14px; height: 486px; background: #a3bcd9; display: flex; align-items: flex-end; justify-content: center; }
.strip span { writing-mode: vertical-rl; transform: rotate(180deg); line-height: 14px; padding-top: 1px; color: #1c1c1c; }
.panel { width: 1350px; display: flex; flex-direction: column; }
.report { height: 477px; border-top: 1px solid #a0a0a0; border-bottom: 1px solid #000; display: flex; flex: none; overflow: hidden; }
.sheet { width: 1329px; flex: none; }
.row { height: 19px; display: grid; grid-template-columns: 449px 449px 431px; }
.row:nth-child(even) { background: #e9e9e9; }
.cell { display: flex; justify-content: space-between; align-items: center; padding: 0 25px 0 3px; white-space: nowrap; }
.cell:last-child { padding-right: 4px; }
.cell span:last-child { letter-spacing: -.4px; }
.cell span.word { letter-spacing: 0; }
.quality { grid-column: span 2; margin: 2px 2px 3px 2px; border: 1px solid #666; background: #c8c8c8; }
.qfill { width: 93.700%; height: 100%; background: #98fb80; }
.graphs { display: flex; background: #fff; height: 95px; }
.gtitle { font: 12px "Liberation Sans", sans-serif; letter-spacing: .1px; fill: #000; }
.glabel { font: 10px "Liberation Sans", sans-serif; fill: #000; text-anchor: end; }
.scroll { flex: 1; background: #f0f0f0; display: flex; flex-direction: column; align-items: flex-start; padding: 1px 0 1px; }
.thumb { width: 15px; height: 145px; margin: 0 0 0 1px; background: #cdcdcd; }
.down { margin-top: auto; }

.btabs { height: 21px; background: #f0f0f0; display: grid; grid-template-columns: 83px 88px 100px 155px 58px 143px 55px 1fr auto auto; align-items: center; flex: none; padding-left: 3px; }
.btab { padding-left: 9px; height: 14px; line-height: 14px; color: #6e6e6e; border-right: 1px solid #777; white-space: nowrap; letter-spacing: -.1px; }
.btab.plain { border-right: 0; }
.btab.active { height: 20px; line-height: 17px; align-self: start; margin-top: -1px; color: #000; background: #fff; border: 1.500px solid #000; border-top: 1px solid #000; letter-spacing: -.3px; }
.timer { color: #222; letter-spacing: -.4px; }
.start { width: 78px; height: 17px; line-height: 15px; margin: 0 4px 0 9px; text-align: center; background: #97cb65; border: 1px solid #b6d98e; color: #1c3a10; }

.status { height: 23px; display: flex; align-items: center; flex: none; }
.st { height: 19px; line-height: 18px; border-right: 1px solid #c8c8c8; padding-left: 2px; flex: none; white-space: nowrap; }
.s1 { width: 673px; }
.s2 { width: 129px; padding-left: 5px; }
.s3 { width: 97px; } .s4 { width: 72px; } .s5 { width: 71px; } .s6 { width: 68px; } .s7 { width: 70px; } .s8 { width: 66px; }
.s9 { border: 0; display: flex; align-items: center; width: 120px; padding-left: 5px; }
.signal { display: flex; align-items: flex-end; gap: 1px; height: 11px; margin-right: 6px; }
.signal i { width: 2px; background: #27a33a; }
.signal i:nth-child(1) { height: 3px; } .signal i:nth-child(2) { height: 5px; } .signal i:nth-child(3) { height: 7px; } .signal i:nth-child(4) { height: 9px; } .signal i:nth-child(5) { height: 11px; }

.taskbar { height: 40px; background: linear-gradient(90deg, #21343f 0%, #21343f 50%, #1f2e40 100%); color: #fff; display: flex; align-items: center; flex: none; position: relative; }
.task { width: 48px; height: 40px; display: flex; align-items: center; justify-content: center; flex: none; }
.bar-sep { width: 3px; height: 16px; border-left: 1px solid #4b5c66; border-right: 1px solid #4b5c66; margin: 0 12px 0 7px; flex: none; }
.task.app { position: relative; margin-left: 1px; }
.task.open::after { content: ""; position: absolute; left: 4px; right: 4px; bottom: 0; height: 2px; background: #76b9ed; }
.task.current { background: #4c5d68; }
.task.current::after { left: 0; right: 0; }
.badge-m { font: bold 6px "Liberation Sans", sans-serif; fill: #cfd8dc; text-anchor: middle; }
.tray { position: absolute; left: 776px; right: 0; top: 0; height: 40px; display: flex; align-items: center; }
.bar-sep.right { margin: 0 11px 0 0; }
.links { color: #e6e9eb; width: 94px; }
.people { fill: none; stroke: #fff; margin-right: 60px; }
.ftse-icon { margin-right: 8px; }
.ftse { font-size: 13.500px; width: 66px; white-space: nowrap; color: #f2f2f2; }
.pct { font-size: 14px; color: #1fa82e; width: 62px; }
.caret { margin-right: 59px; }
.pen { margin-left: 13px; }
.clock { width: 84px; display: flex; flex-direction: column; align-items: center; line-height: 18px; color: #e6e9eb; }
.notify { margin-left: 5px; }
```
